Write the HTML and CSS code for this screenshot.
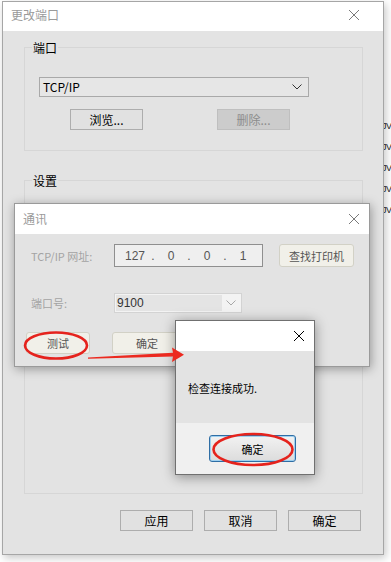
FILE: index.html
```html
<!DOCTYPE html>
<html lang="zh-CN">
<head>
<meta charset="utf-8">
<title>更改端口</title>
<link rel="stylesheet" href="styles.css">
</head>
<body>
<div class="bg-right">
  <span>JV</span><span>JV</span><span>JV</span><span>JV</span><span>JV</span>
</div>

<div class="window main-win">
  <div class="titlebar">
    <span class="title">更改端口</span>
    <svg class="close" width="12" height="12" viewBox="0 0 12 12"><path d="M1 1L11 11M11 1L1 11" /></svg>
  </div>
  <div class="wbody">
    <div class="group g1">
      <span class="legend">端口</span>
      <div class="combo">
        <span class="combo-text">TCP/IP</span>
        <svg class="chev" width="10" height="6" viewBox="0 0 10 6"><polyline points="0.5,0.5 5,5 9.5,0.5" /></svg>
      </div>
      <div class="btnrow">
        <button class="btn">浏览...</button>
        <button class="btn disabled">删除...</button>
      </div>
    </div>
    <div class="group g2">
      <span class="legend">设置</span>
    </div>
    <div class="footer">
      <button class="btn big">应用</button>
      <button class="btn big">取消</button>
      <button class="btn big">确定</button>
    </div>
  </div>
</div>

<div class="window dlg">
  <div class="titlebar dlg-title">
    <span class="title">通讯</span>
    <svg class="close" width="12" height="12" viewBox="0 0 12 12"><path d="M1 1L11 11M11 1L1 11" /></svg>
  </div>
  <div class="dbody">
    <div class="drow">
      <span class="dlabel">TCP/IP 网址:</span>
      <div class="ipbox">
        <span class="seg">127</span><span class="dot">.</span><span class="seg">0</span><span class="dot">.</span><span class="seg">0</span><span class="dot">.</span><span class="seg">1</span>
      </div>
      <button class="xbtn find">查找打印机</button>
    </div>
    <div class="drow r2">
      <span class="dlabel">端口号:</span>
      <div class="portcombo">
        <span class="port-text">9100</span>
        <span class="port-drop"><svg width="10" height="6" viewBox="0 0 10 6"><polyline points="0.5,0.5 5,5 9.5,0.5" /></svg></span>
      </div>
    </div>
    <div class="drow r3">
      <button class="xbtn act">测试</button>
      <button class="xbtn act ok2">确定</button>
    </div>
  </div>
</div>

<div class="window msg">
  <div class="titlebar msg-title">
    <svg class="close dark" width="12" height="12" viewBox="0 0 12 12"><path d="M1 1L11 11M11 1L1 11" /></svg>
  </div>
  <div class="msg-body">检查连接成功.</div>
  <div class="msg-foot">
    <button class="okbtn">确定</button>
  </div>
</div>

<svg class="annot" width="391" height="562" viewBox="0 0 391 562">
  <ellipse cx="56" cy="345.5" rx="31" ry="13" />
  <ellipse cx="253" cy="449.5" rx="39.5" ry="15.5" />
  <polygon class="arrow" points="88,357.6 173,352.8 172,347.5 184,354.8 172,362 173,356.6 88,358.8" />
</svg>
</body>
</html>
```

FILE: styles.css
```css
* { box-sizing: border-box; }

html, body {
  margin: 0;
  padding: 0;
}

body {
  width: 391px;
  height: 562px;
  background: #ffffff;
  position: relative;
  overflow: hidden;
  font-family: "Noto Sans CJK SC", "Noto Sans", sans-serif;
  font-size: 12px;
  color: #000;
}

button {
  font-family: inherit;
  padding: 0;
  margin: 0;
  cursor: default;
}

/* background fragments to the right of the window (partly under it) */
.bg-right {
  position: absolute;
  left: 382px;
  top: 116px;
  display: flex;
  flex-direction: column;
  font-family: "Liberation Sans", sans-serif;
  font-size: 9px;
  line-height: 21px;
  letter-spacing: -0.5px;
  color: #1b1b1b;
}

/* windows */
.window {
  background: #e3e3e3;
  border: 1px solid #a6a6a6;
}

.main-win {
  position: relative;
  margin: 1px 0 0 2px;
  width: 382px;
  height: 554px;
  box-shadow: 2px 3px 8px rgba(0, 0, 0, 0.22);
  display: flex;
  flex-direction: column;
}

.titlebar {
  background: #ffffff;
  height: 29px;
  flex: none;
  display: flex;
  align-items: center;
  justify-content: space-between;
  padding: 0 23px 3px 8px;
}

.title {
  color: #9a9a9a;
  font-size: 12px;
  line-height: 16px;
}

.close path {
  stroke: #7a7a7a;
  stroke-width: 1;
  fill: none;
}

.close.dark path {
  stroke: #000;
}

.wbody {
  flex: 1;
  display: flex;
  flex-direction: column;
}

.group {
  position: relative;
  border: 1px solid #d6d6d6;
  margin: 0 20px 0 21px;
}

.legend {
  position: absolute;
  top: -8px;
  left: 7px;
  padding: 0 1px;
  background: #e3e3e3;
  line-height: 16px;
  font-size: 12px;
  color: #000;
}

.g1 {
  margin-top: 16px;
  height: 104px;
  padding: 29px 0 0 14px;
}

.g2 {
  margin-top: 29px;
  height: 314px;
}

.combo {
  width: 270px;
  height: 20px;
  border: 1px solid #a9a9a9;
  background: #e6e6e6;
  display: flex;
  align-items: center;
  justify-content: space-between;
  padding: 0 6px 0 3px;
}

.combo-text {
  font-size: 12px;
  line-height: 16px;
  color: #000;
}

.chev polyline,
.port-drop polyline {
  fill: none;
  stroke: #333;
  stroke-width: 1;
}

.port-drop polyline {
  stroke: #a8a8a8;
}

.btnrow {
  display: flex;
  gap: 74px;
  margin: 12px 0 0 31px;
}

.btn {
  width: 73px;
  height: 21px;
  background: #e1e1e1;
  border: 1px solid #adadad;
  font-size: 12px;
  line-height: 16px;
  color: #000;
}

.btn.disabled {
  background: #cccccc;
  border-color: #bfbfbf;
  color: #8d8d8d;
}

.footer {
  display: flex;
  justify-content: flex-end;
  gap: 11px;
  margin: 16px 22px 0 0;
}

.btn.big {
  height: 21px;
}

/* 通讯 dialog */
.dlg {
  position: absolute;
  left: 14px;
  top: 203px;
  width: 356px;
  height: 164px;
  border-color: #9a9a9a;
  box-shadow: 1px 2px 10px rgba(0, 0, 0, 0.35);
  display: flex;
  flex-direction: column;
}

.dlg-title {
  height: 30px;
  padding: 0 9px 0 8px;
}

.dbody {
  padding: 10px 0 0 11px;
  font-size: 11px;
}

.drow {
  display: flex;
  align-items: center;
}

.dlabel {
  width: 88px;
  padding-left: 5px;
  color: #a3a3a3;
  font-size: 11px;
  line-height: 14px;
  flex: none;
}

.ipbox {
  width: 149px;
  height: 23px;
  border: 1px solid #8f8f8f;
  background: #efefef;
  display: flex;
  align-items: center;
  padding-left: 7px;
  color: #555;
  font-family: "Liberation Sans", sans-serif;
  font-size: 12px;
  line-height: 14px;
}

.seg {
  width: 26px;
  text-align: center;
}

.dot {
  width: 10px;
  text-align: center;
}

.xbtn {
  background: #f1f0e9;
  border: 1px solid #d2d1c6;
  border-radius: 3px;
  font-size: 11px;
  line-height: 14px;
  color: #555;
}

.find {
  margin-left: 16px;
  width: 75px;
  height: 23px;
}

.r2 {
  margin-top: 26px;
}

.portcombo {
  width: 128px;
  height: 20px;
  border: 1px solid #d3d3d3;
  background: #f3f3f3;
  display: flex;
  padding: 1px;
}

.port-text {
  width: 106px;
  background: #e4e4e4;
  font-family: "Liberation Sans", sans-serif;
  font-size: 12px;
  line-height: 16px;
  color: #333;
  padding-left: 1px;
}

.port-drop {
  flex: 1;
  display: flex;
  align-items: center;
  justify-content: center;
}

.r3 {
  margin-top: 19px;
  gap: 22px;
}

.act {
  width: 64px;
  height: 22px;
}

.ok2 {
  width: 70px;
}

/* message box */
.msg {
  position: absolute;
  left: 175px;
  top: 320px;
  width: 140px;
  height: 155px;
  border-color: #707070;
  box-shadow: 0 2px 12px rgba(0, 0, 0, 0.4);
  display: flex;
  flex-direction: column;
}

.msg-title {
  height: 30px;
  justify-content: flex-end;
  padding: 0 9px 0 0;
}

.msg-body {
  height: 72px;
  padding: 28px 0 0 12px;
  font-size: 11px;
  line-height: 18px;
  color: #000;
  background: #e3e3e3;
}

.msg-foot {
  flex: 1;
  background: #f0f0f0;
  display: flex;
  justify-content: flex-end;
  align-items: flex-start;
  padding: 12px 18px 0 0;
}

.okbtn {
  width: 87px;
  height: 27px;
  border: 1px solid #2f6ea5;
  border-radius: 3px;
  background: linear-gradient(#f2f2f2, #dcdcdc);
  box-shadow: inset 0 0 0 1px #9fd0f0;
  font-size: 11px;
  line-height: 14px;
  color: #000;
}

/* red annotations */
.annot {
  position: absolute;
  left: 0;
  top: 0;
  pointer-events: none;
}

.annot ellipse {
  fill: none;
  stroke: #e5231d;
  stroke-width: 2.6;
}

.annot .arrow {
  fill: #ec2a20;
}
```
